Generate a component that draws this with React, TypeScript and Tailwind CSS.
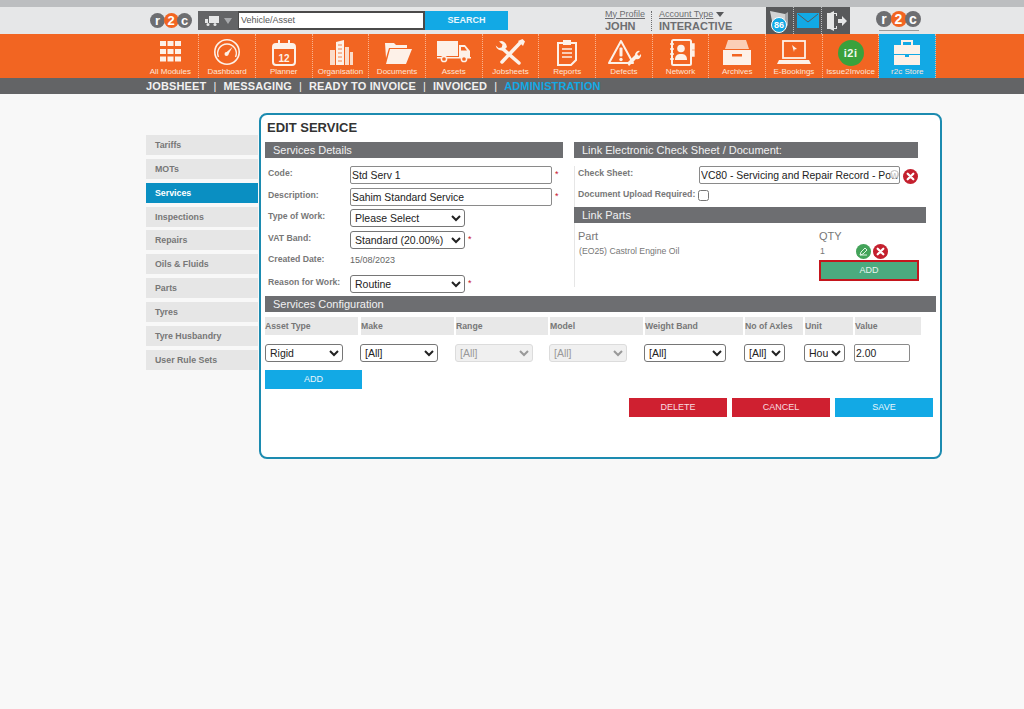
import type { ReactNode } from "react"

const cream = "#fdf1e8"

function Logo({ large }: { large?: boolean }) {
   const size = large ? "w-[16px] h-[16px] text-[14px]" : "w-[15px] h-[15px] text-[13px]"
   return (
      <div className="flex">
         <span className={`${size} rounded-full bg-[#6d6e71] text-white font-bold flex items-center justify-center leading-none`}>r</span>
         <span className={`${size} rounded-full bg-[#f26522] text-white font-bold flex items-center justify-center leading-none -ml-[1.5px]`}>2</span>
         <span className={`${size} rounded-full bg-[#6d6e71] text-white font-bold flex items-center justify-center leading-none -ml-[1.5px]`}>c</span>
      </div>
   )
}

function Ico({ children }: { children: ReactNode }) {
   return (
      <svg width="36" height="30" viewBox="0 0 36 30" fill={cream} stroke="none" className="block">
         {children}
      </svg>
   )
}

const modules: { label: string; icon: ReactNode }[] = [
   {
      label: "All Modules",
      icon: (
         <Ico>
            {[8, 15.5, 23].map((x) =>
               [4, 12, 19.5].map((y) => <rect key={`${x}-${y}`} x={x} y={y} width="6" height="5" />),
            )}
         </Ico>
      ),
   },
   {
      label: "Dashboard",
      icon: (
         <Ico>
            <circle cx="18" cy="15" r="12.2" fill="none" stroke={cream} strokeWidth="1.6" />
            <path d="M9.5 20a9.3 9.3 0 1 1 17 0" fill="none" stroke={cream} strokeWidth="1.4" />
            <path d="M16.5 16l7-6-4.5 8z" />
            <circle cx="17.5" cy="17" r="2" />
         </Ico>
      ),
   },
   {
      label: "Planner",
      icon: (
         <Ico>
            <rect x="7" y="7" width="22" height="21" rx="3" fill="none" stroke={cream} strokeWidth="2" />
            <rect x="7" y="7" width="22" height="5" />
            <rect x="12" y="3" width="2" height="7" />
            <rect x="22" y="3" width="2" height="7" />
            <text x="18" y="24.5" textAnchor="middle" fontSize="10" fontWeight="700" fontFamily="Liberation Sans">12</text>
         </Ico>
      ),
   },
   {
      label: "Organisation",
      icon: (
         <Ico>
            <path d="M14 5l8-2v25h-8z" />
            <path d="M8 13h5v15H8zM23 10h4v18h-4zM28 15h3v13h-3z" opacity="0.85" />
            <path d="M16 8h4M16 12h4M16 16h4M16 20h4M16 24h4" stroke="#f26522" strokeWidth="0.8" />
         </Ico>
      ),
   },
   {
      label: "Documents",
      icon: (
         <Ico>
            <path d="M6 6h9l2 2h11v3H10L7 21z" />
            <path d="M11 12h22l-6 15H7z" />
         </Ico>
      ),
   },
   {
      label: "Assets",
      icon: (
         <Ico>
            <rect x="1" y="4" width="21" height="15" />
            <path d="M23 8h6l5 6v7H23z" fill={cream} />
            <path d="M25 10h3.5l2.5 3.5h-6z" fill="#f26522" />
            <rect x="1" y="20" width="34" height="1.5" />
            <circle cx="8" cy="22" r="2.6" fill="#f26522" stroke={cream} strokeWidth="1.5" />
            <circle cx="28" cy="22" r="2.6" fill="#f26522" stroke={cream} strokeWidth="1.5" />
         </Ico>
      ),
   },
   {
      label: "Jobsheets",
      icon: (
         <Ico>
            <path d="M11 12L27 26" stroke={cream} strokeWidth="3.5" strokeLinecap="round" />
            <path d="M7 4.5l3.5 3-.8 3-3 .6-3-2.7A6 6 0 0 0 12 13l3-3a6 6 0 0 0-8-5.5z" />
            <path d="M28 6L10 25" stroke={cream} strokeWidth="3.5" strokeLinecap="round" />
            <path d="M26 4l4.5-2 2.5 2.5-2 4.5z" />
         </Ico>
      ),
   },
   {
      label: "Reports",
      icon: (
         <Ico>
            <path d="M9 6h18v17l-5 5H9z" fill="none" stroke={cream} strokeWidth="2" />
            <rect x="14" y="3" width="8" height="5" />
            <path d="M13 12h10M13 16h10M13 20h10" stroke={cream} strokeWidth="1.5" />
         </Ico>
      ),
   },
   {
      label: "Defects",
      icon: (
         <Ico>
            <path d="M15 4L3 26h24z" fill="none" stroke={cream} strokeWidth="2" strokeLinejoin="round" />
            <rect x="13.5" y="10.5" width="3" height="9" rx="1" />
            <circle cx="15" cy="22.5" r="1.7" />
            <path d="M21 26l8-8a4 4 0 0 1 5-4l-3 3 2 2 2-2a4 4 0 0 1-5 5l-7 7z" />
         </Ico>
      ),
   },
   {
      label: "Network",
      icon: (
         <Ico>
            <rect x="9" y="3" width="19" height="25" rx="1.5" fill="none" stroke={cream} strokeWidth="2" />
            <circle cx="18" cy="11.5" r="3.8" />
            <path d="M12 23c0-5 2.5-6 6-6s6 1 6 6z" />
            <path d="M7 7h4M7 12h4M7 17h4M7 22h4M28 7h3v5h-3zM28 14h3v5h-3z" stroke={cream} strokeWidth="1.4" />
         </Ico>
      ),
   },
   {
      label: "Archives",
      icon: (
         <Ico>
            <path d="M9 3h18l3 9H6z" opacity="0.75" />
            <path d="M4 13h28v15H4z" />
            <rect x="13" y="17" width="10" height="2.5" fill="#f26522" />
         </Ico>
      ),
   },
   {
      label: "E-Bookings",
      icon: (
         <Ico>
            <rect x="7" y="4" width="22" height="17" fill="none" stroke={cream} strokeWidth="1.8" />
            <path d="M3 23h30l2 4H1z" />
            <path d="M16 8l5 4-2.5.5L18 15z" />
         </Ico>
      ),
   },
   {
      label: "Issue2Invoice",
      icon: (
         <div className="w-[26px] h-[26px] mt-[3px] mx-auto rounded-full bg-[#3aa13c] text-[#f1f8ee] font-bold text-[11px] tracking-[0.5px] flex items-center justify-center">
            i2i
         </div>
      ),
   },
   {
      label: "r2c Store",
      icon: (
         <Ico>
            <path d="M13 8V4h10v4" fill="none" stroke={cream} strokeWidth="2" />
            <path d="M5 8h26v9H5z" />
            <path d="M5 18h11v2h4v-2h11v10H5z" />
         </Ico>
      ),
   },
]

const navItems = ["JOBSHEET", "MESSAGING", "READY TO INVOICE", "INVOICED"]
const sideItems = ["Tariffs", "MOTs", "Services", "Inspections", "Repairs", "Oils & Fluids", "Parts", "Tyres", "Tyre Husbandry", "User Rule Sets"]
const tableHeads = ["Asset Type", "Make", "Range", "Model", "Weight Band", "No of Axles", "Unit", "Value"]

const fieldCls = "h-[18px] border border-[#8a8a8a] rounded-[2px] bg-white text-[10.4px] text-[#222] px-[1px] outline-none"
const selectBase = "h-[18px] border rounded-[3px] text-[10.5px]"
const selectCls = `${selectBase} border-[#767676] bg-white text-[#222]`
const disabledCls = `${selectBase} border-[#dcdcdc] bg-[#f0f0f0] text-[#999]`
const labelCls = "text-[8.7px] font-bold text-[#777] whitespace-nowrap"

function SectionHead({ title, className }: { title: string; className: string }) {
   return <div className={`h-[16px] bg-[#6d6e71] text-[#f1f1f1] text-[11px] leading-[16px] pl-[8px] ${className}`}>{title}</div>
}

function Req() {
   return <span className="text-[#c8102e] text-[9px] ml-[3px]">*</span>
}

function RedX({ size }: { size: number }) {
   return (
      <svg width={size} height={size} viewBox="0 0 16 16" className="block">
         <circle cx="8" cy="8" r="8" fill="#c4202e" />
         <path d="M5 5l6 6M11 5l-6 6" stroke="#fff" strokeWidth="2.4" strokeLinecap="round" />
      </svg>
   )
}

function FormRow({ label, children, className }: { label: string; children: ReactNode; className: string }) {
   return (
      <div className={`flex items-center ${className}`}>
         <label className={`${labelCls} mb-[2px] w-[82px] shrink-0`}>{label}</label>
         {children}
      </div>
   )
}

export default function App() {
   return (
      <div className="min-h-[709px] bg-[#f8f8f8] font-['Liberation_Sans',Arial,sans-serif]">
         <div className="h-[7px] bg-[#bcbec0]" />

         {/* Top bar */}
         <div className="h-[27px] bg-[#e6e7e8] flex items-center relative">
            <div className="ml-[150px] w-[48px]">
               <Logo />
            </div>
            <div className="w-[40px] h-[19px] bg-[#636466] flex items-center justify-center gap-[5px]">
               <svg width="14" height="10" viewBox="0 0 14 10" fill="#e6e7e8">
                  <rect x="4" y="0" width="10" height="7" />
                  <path d="M0 3h3v4H0z" />
                  <circle cx="3" cy="8.5" r="1.5" />
                  <circle cx="10" cy="8.5" r="1.5" />
               </svg>
               <span className="w-0 h-0 border-x-[4px] border-x-transparent border-t-[6px] border-t-[#a7a9ac]" />
            </div>
            <div className="w-[187px] h-[19px] bg-white border-2 border-[#4a4a4a] border-l-[1px] text-[9px] text-[#555] leading-[15px] pl-[2px]">Vehicle/Asset</div>
            <div className="w-[83px] h-[19px] bg-[#12a9e5] text-[#e8f6fc] text-[9px] font-bold flex items-center justify-center">SEARCH</div>

            <div className="ml-[97px] w-[46px] text-[#6d6e71] leading-none">
               <div className="text-[9px] underline">My Profile</div>
               <div className="text-[11px] font-bold mt-[2px]">JOHN</div>
            </div>
            <div className="h-[20px] border-l border-dotted border-[#6d6e71] mr-[7px]" />
            <div className="w-[107px] text-[#6d6e71] leading-none">
               <div className="text-[9px] flex items-center gap-[3px]">
                  <span className="underline">Account Type</span>
                  <span className="w-0 h-0 border-x-[4px] border-x-transparent border-t-[5px] border-t-[#58595b]" />
               </div>
               <div className="text-[11px] font-bold mt-[2px]">INTERACTIVE</div>
            </div>

            <div className="w-[84px] h-[27px] bg-[#58595b] flex items-center">
               <div className="relative w-[28px] h-[27px] border-r border-dotted border-[#bcbec0]">
                  <svg width="22" height="22" viewBox="0 0 22 22" className="absolute left-[2px] top-[2px]">
                     <path d="M2 2l15 3v15L5 17z" fill="#d1d3d4" />
                     <path d="M17 5l3-2v13l-3 4z" fill="#a7a9ac" />
                  </svg>
                  <span className="absolute left-[5px] top-[10px] w-[16px] h-[16px] rounded-full bg-[#12a9e5] border border-white text-white text-[9px] font-bold flex items-center justify-center leading-none">86</span>
               </div>
               <div className="w-[28px] flex justify-center border-r border-dotted border-[#bcbec0] h-[27px] items-center">
                  <svg width="22" height="15" viewBox="0 0 22 15">
                     <rect width="22" height="15" fill="#12a9e5" />
                     <path d="M1 1l10 8 10-8" fill="none" stroke="#58595b" strokeWidth="1" />
                  </svg>
               </div>
               <div className="w-[28px] flex justify-center">
                  <svg width="22" height="20" viewBox="0 0 22 20" fill="#e6e7e8">
                     <path d="M2 2h10v3h-1V3H3v14h8v-2h1v3H2z" />
                     <path d="M3 3l6-3v20l-6-3z" />
                     <path d="M13 8h4V5l5 5-5 5v-3h-4z" />
                  </svg>
               </div>
            </div>

            <div className="ml-[26px] flex flex-col items-center">
               <Logo large />
               <div className="w-[40px] border-t border-[#9a9a9a] mt-[3px]" />
            </div>
         </div>

         {/* Modules */}
         <div className="h-[44px] bg-[#f26522] flex pl-[142.5px]">
            {modules.map((m) => (
               <div
                  key={m.label}
                  className={`w-[56.7px] h-[44px] pt-[3px] text-center border-r border-dotted border-[#f9b48f] ${m.label === "r2c Store" ? "bg-[#12a9e5]" : ""}`}
               >
                  <div className="flex justify-center h-[30px]">{m.icon}</div>
                  <div className="text-[8px] leading-[9px] text-[#fde6d8] whitespace-nowrap">{m.label}</div>
               </div>
            ))}
         </div>

         {/* Sub nav */}
         <div className="h-[16px] bg-[#636466] pl-[146px] flex items-center text-[11px] font-bold text-[#f1f1f1] whitespace-nowrap tracking-[0.14px]">
            {navItems.map((n) => (
               <span key={n}>
                  {n}
                  <span className="mx-[7px] font-normal">|</span>
               </span>
            ))}
            <span className="text-[#12a9e5]">ADMINISTRATION</span>
         </div>

         {/* Content */}
         <div className="flex pl-[146px] pt-[19px]">
            <div className="w-[113px] pt-[22px] shrink-0">
               {sideItems.map((s) => (
                  <div
                     key={s}
                     className={`w-[112px] h-[20px] mb-[3.85px] pl-[9px] text-[8.8px] font-bold leading-[20px] ${s === "Services" ? "bg-[#0a8fc2] text-white" : "bg-[#e6e6e6] text-[#777]"}`}
                  >
                     {s}
                  </div>
               ))}
            </div>

            <div className="w-[683px] h-[346px] border-2 border-[#1c8bb0] rounded-[8px] bg-white pl-[4px]">
               <h1 className="text-[13px] font-bold text-[#333] leading-[14px] pt-[6px] pl-[2px] h-[27px]">EDIT SERVICE</h1>

               <div className="flex">
                  <div className="w-[309px] shrink-0">
                     <SectionHead title="Services Details" className="w-[298px]" />
                     <div className="pl-[3px]">
                        <FormRow label="Code:" className="mt-[8px] h-[18px]">
                           <input readOnly value="Std Serv 1" className={`${fieldCls} w-[202px]`} />
                           <Req />
                        </FormRow>
                        <FormRow label="Description:" className="mt-[4px] h-[18px]">
                           <input readOnly value="Sahim Standard Service" className={`${fieldCls} w-[202px]`} />
                           <Req />
                        </FormRow>
                        <FormRow label="Type of Work:" className="mt-[3px] h-[18px]">
                           <select defaultValue="Please Select" className={`${selectCls} w-[115px]`}>
                              <option>Please Select</option>
                           </select>
                        </FormRow>
                        <FormRow label="VAT Band:" className="mt-[4px] h-[18px]">
                           <select defaultValue="Standard (20.00%)" className={`${selectCls} w-[115px]`}>
                              <option>Standard (20.00%)</option>
                           </select>
                           <Req />
                        </FormRow>
                        <FormRow label="Created Date:" className="h-[21px] mt-[1px]">
                           <span className="text-[9px] text-[#666]">15/08/2023</span>
                        </FormRow>
                        <FormRow label="Reason for Work:" className="mt-[4px] h-[18px]">
                           <select defaultValue="Routine" className={`${selectCls} w-[115px]`}>
                              <option>Routine</option>
                           </select>
                           <Req />
                        </FormRow>
                     </div>
                  </div>

                  <div className="w-[352px] shrink-0">
                     <SectionHead title="Link Electronic Check Sheet / Document:" className="w-[344px]" />
                     <div className="border-l border-[#e6e6e6] h-[121px] pl-[3px]">
                        <div className="flex items-center mt-[8px] h-[18px] relative">
                           <label className={`${labelCls} mb-[2px] w-[121px] shrink-0`}>Check Sheet:</label>
                           <input readOnly value="VC80 - Servicing and Repair Record - Power" className={`${fieldCls} w-[201px]`} />
                           <span className="absolute left-[312px] top-[4px] w-[9px] h-[9px] rounded-full border border-[#bbb] bg-white/70" />
                           <div className="ml-[3px] mt-[2px]">
                              <RedX size={15} />
                           </div>
                        </div>
                        <div className="flex items-center h-[16px] mt-[3px]">
                           <label className={`${labelCls} w-[120px] shrink-0`}>Document Upload Required:</label>
                           <input type="checkbox" readOnly className="w-[11px] h-[11px] m-0" />
                        </div>
                        <SectionHead title="Link Parts" className="w-[352px] -ml-[4px] mt-[4px]" />
                        <div className="flex text-[11px] text-[#777] mt-[7px] leading-[13px]">
                           <span className="w-[241px]">Part</span>
                           <span>QTY</span>
                        </div>
                        <div className="flex items-center h-[15px] mt-[1px] text-[8.7px] text-[#777]">
                           <span className="w-[242px] pl-px">(EO25) Castrol Engine Oil</span>
                           <span className="w-[36px]">1</span>
                           <svg width="15" height="15" viewBox="0 0 15 15" className="block">
                              <circle cx="7.5" cy="7.5" r="7.5" fill="#43a35a" />
                              <path d="M4 11l1-3 4-4 2 2-4 4zM4 11h7" fill="none" stroke="#dff3e4" strokeWidth="1" />
                           </svg>
                           <div className="ml-[2px]">
                              <RedX size={15} />
                           </div>
                        </div>
                        <div className="ml-[241px] w-[100px] h-[21px] mt-[1px] bg-[#4bab7f] border-2 border-[#c5161d] text-[#e8f5ee] text-[9px] flex items-center justify-center">
                           ADD
                        </div>
                     </div>
                  </div>
               </div>

               <SectionHead title="Services Configuration" className="w-[671px] mt-[3px]" />

               <div className="grid grid-cols-[95px_95px_94px_95px_100px_60px_50px_68px] w-[657px] mt-[5px]">
                  {tableHeads.map((h, i) => (
                     <div
                        key={h}
                        className={`h-[18px] bg-[#e8e8e8] text-[8.7px] font-bold text-[#777] leading-[18px] ${i === 0 ? "mr-[2px]" : "ml-px mr-px"}`}
                     >
                        {h}
                     </div>
                  ))}
                  <select defaultValue="Rigid" className={`${selectCls} w-[78px] mt-[9px]`}>
                     <option>Rigid</option>
                  </select>
                  <select defaultValue="[All]" className={`${selectCls} w-[78px] mt-[9px]`}>
                     <option>[All]</option>
                  </select>
                  <select disabled defaultValue="[All]" className={`${disabledCls} w-[78px] mt-[9px]`}>
                     <option>[All]</option>
                  </select>
                  <select disabled defaultValue="[All]" className={`${disabledCls} w-[78px] mt-[9px]`}>
                     <option>[All]</option>
                  </select>
                  <select defaultValue="[All]" className={`${selectCls} w-[82px] mt-[9px]`}>
                     <option>[All]</option>
                  </select>
                  <select defaultValue="[All]" className={`${selectCls} w-[41px] mt-[9px]`}>
                     <option>[All]</option>
                  </select>
                  <select defaultValue="Hours" className={`${selectCls} w-[41px] mt-[9px]`}>
                     <option>Hours</option>
                  </select>
                  <input readOnly value="2.00" className={`${fieldCls} w-[56px] mt-[9px]`} />
               </div>

               <div className="w-[97px] h-[19px] mt-[8px] bg-[#12a9e5] text-[#e8f6fc] text-[9px] flex items-center justify-center">ADD</div>

               <div className="flex justify-end w-[668px] gap-[5px] mt-[9px]">
                  <div className="w-[98px] h-[19px] bg-[#cf2030] text-[#f8dde0] text-[9px] flex items-center justify-center">DELETE</div>
                  <div className="w-[98px] h-[19px] bg-[#cf2030] text-[#f8dde0] text-[9px] flex items-center justify-center">CANCEL</div>
                  <div className="w-[98px] h-[19px] bg-[#12a9e5] text-[#e8f6fc] text-[9px] flex items-center justify-center">SAVE</div>
               </div>
            </div>
         </div>
      </div>
   )
}
